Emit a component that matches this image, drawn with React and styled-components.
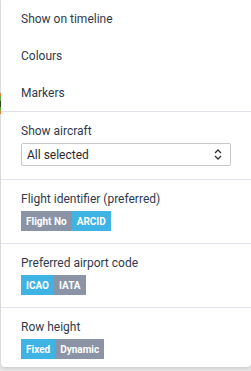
import React from "react";
import styled, { createGlobalStyle } from "styled-components";

const Global = createGlobalStyle`
  html, body { margin: 0; padding: 0; background: #ffffff; }
  body { font-family: Roboto, "Liberation Sans", sans-serif; }
`;

const Page = styled.div`
  display: grid;
  grid-template-columns: 1px 1fr;
  align-items: start;
  width: 251px;
  height: 371px;
  background: #e4e4e4;
`;

const Edge = styled.div`
  display: flex;
  flex-direction: column;
  padding-top: 93px;
`;

const EdgeMark = styled.div`
  height: ${(p) => p.h}px;
  background: ${(p) => p.c};
`;

const Panel = styled.div`
  background: #ffffff;
  border-radius: 0 0 4px 4px;
  box-shadow: 0 1px 3px rgba(0, 0, 0, 0.12);
  display: flex;
  flex-direction: column;
`;

const MenuItem = styled.div`
  height: 37px;
  flex-shrink: 0;
  display: flex;
  align-items: center;
  padding-left: 20px;
  font-size: 12px;
  color: #2f3a4d;
`;

const Section = styled.div`
  flex-shrink: 0;
  border-top: 1px solid #e1e1ea;
  padding: 12px 20px ${(p) => p.pb ?? 12}px 20px;
  display: flex;
  flex-direction: column;
  gap: 5px;
`;

const Label = styled.div`
  font-size: 12px;
  line-height: 14px;
  color: #2f3a4d;
`;

const Select = styled.div`
  height: 23px;
  box-sizing: border-box;
  width: 210px;
  border: 1px solid #c9c9c9;
  border-radius: 2px;
  display: flex;
  align-items: center;
  justify-content: space-between;
  padding: 0 8px 0 5px;
  font-size: 12px;
  color: #2b2b2b;
`;

const Toggle = styled.div`
  display: flex;
`;

const Opt = styled.div`
  height: 20px;
  display: flex;
  align-items: center;
  padding: 0 5px;
  font-size: 10px;
  font-weight: 700;
  color: #ffffff;
  background: ${(p) => (p.active ? "#3fb3e3" : "#8a94a6")};
`;

const Chevrons = () => (
  <svg width="8" height="11" viewBox="0 0 8 11" fill="none" stroke="#333" strokeWidth="1.3">
    <path d="M1 4 L4 1 L7 4" />
    <path d="M1 7 L4 10 L7 7" />
  </svg>
);

export default function App() {
  return (
    <>
      <Global />
      <Page>
        <Edge>
          <EdgeMark h={3} c="#f08a3a" />
          <EdgeMark h={5} c="#6ab04c" />
          <EdgeMark h={6} c="#2d4a1f" />
          <EdgeMark h={4} c="#6ab04c" />
          <EdgeMark h={3} c="#f08a3a" />
        </Edge>
        <Panel>
          <MenuItem>Show on timeline</MenuItem>
          <MenuItem>Colours</MenuItem>
          <MenuItem>Markers</MenuItem>
          <Section pb={13}>
            <Label>Show aircraft</Label>
            <Select>
              <span>All selected</span>
              <Chevrons />
            </Select>
          </Section>
          <Section>
            <Label>Flight identifier (preferred)</Label>
            <Toggle>
              <Opt>Flight No</Opt>
              <Opt active>ARCID</Opt>
            </Toggle>
          </Section>
          <Section>
            <Label>Preferred airport code</Label>
            <Toggle>
              <Opt active>ICAO</Opt>
              <Opt>IATA</Opt>
            </Toggle>
          </Section>
          <Section pb={8}>
            <Label>Row height</Label>
            <Toggle>
              <Opt active>Fixed</Opt>
              <Opt>Dynamic</Opt>
            </Toggle>
          </Section>
        </Panel>
      </Page>
    </>
  );
}
